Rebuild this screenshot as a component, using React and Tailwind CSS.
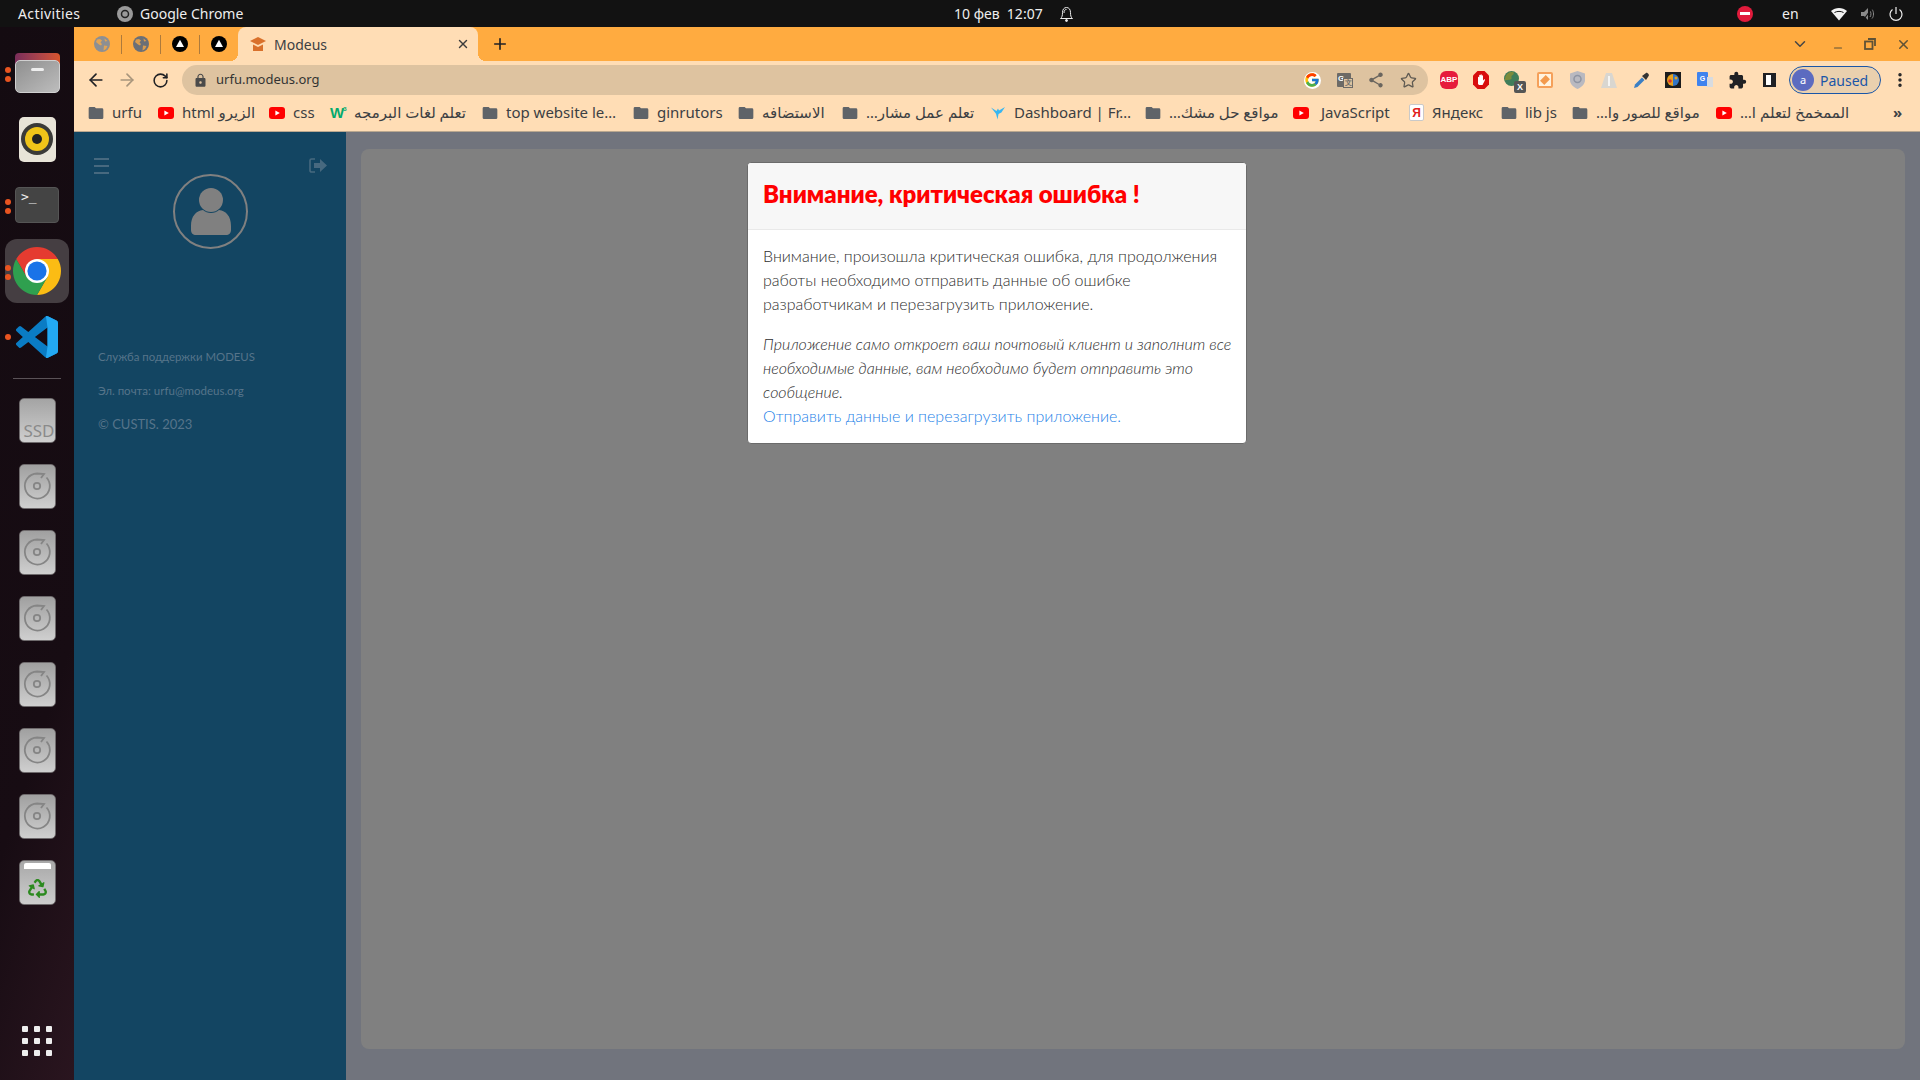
import React from "react";
import { ArrowLeft, ArrowRight, RotateCw, Star, X, Plus, ChevronDown, Minus, Ellipsis } from "lucide-react";
import { MdLock, MdShare, MdExtension } from "react-icons/md";
import { FcGoogle } from "react-icons/fc";
import { FaRecycle } from "react-icons/fa";

const Folder = () => (
  <svg width="16" height="16" viewBox="0 0 24 24" className="shrink-0"><path fill="#5f6368" d="M10 3H3a2 2 0 0 0-2 2v14a2 2 0 0 0 2 2h18a2 2 0 0 0 2-2V7a2 2 0 0 0-2-2H12z" /></svg>
);
const Yt = () => (
  <svg width="16" height="16" viewBox="0 0 16 16" className="shrink-0"><rect x="0" y="2" width="16" height="12" rx="3" fill="#ff0000" /><path d="M6.4 5.4 10.8 8l-4.4 2.6z" fill="#fff" /></svg>
);
const W3 = () => (
  <span className="w-[16px] h-[16px] shrink-0 flex items-start text-[#04aa6d] font-bold text-[15px] leading-[16px] font-['Liberation_Sans',sans-serif]">W<span className="text-[6px] leading-[8px] -ml-[1px]">3</span></span>
);
const Bird = () => (
  <svg width="16" height="16" viewBox="0 0 16 16" className="shrink-0"><path d="M1 2.5 6.5 6 8 3.5l1 2L15 2l-3.6 5.5L8.5 9 7.5 14.5 6 8.8z" fill="#38b6f1" /></svg>
);
const Ya = () => (
  <span className="w-[15px] h-[17px] shrink-0 bg-white border border-[#c9c9c9] rounded-[2px] flex items-center justify-center text-[#e0201b] font-bold text-[12px] leading-none font-['Liberation_Sans',sans-serif]">Я</span>
);

const bookmarks = [
  { w: "w-[70px] gap-[8px]", icon: <Folder />, t: "urfu" },
  { w: "w-[111px] gap-[8px]", icon: <Yt />, t: "html الزيرو" },
  { w: "w-[61px] gap-[8px]", icon: <Yt />, t: "css" },
  { w: "w-[152px] gap-[8px]", icon: <W3 />, t: "تعلم لغات البرمجه" },
  { w: "w-[151px] gap-[8px]", icon: <Folder />, t: "top website le…" },
  { w: "w-[105px] gap-[8px]", icon: <Folder />, t: "ginrutors" },
  { w: "w-[104px] gap-[8px]", icon: <Folder />, t: "الاستضافه" },
  { w: "w-[148px] gap-[8px]", icon: <Folder />, t: "تعلم عمل مشار…", rtl: true },
  { w: "w-[155px] gap-[8px]", icon: <Bird />, t: "Dashboard | Fr…" },
  { w: "w-[148px] gap-[8px]", icon: <Folder />, t: "مواقع حل مشك…", rtl: true },
  { w: "w-[116px] gap-[12px]", icon: <Yt />, t: "JavaScript" },
  { w: "w-[92px] gap-[8px]", icon: <Ya />, t: "Яндекс" },
  { w: "w-[71px] gap-[8px]", icon: <Folder />, t: "lib js" },
  { w: "w-[144px] gap-[8px]", icon: <Folder />, t: "مواقع للصور وا…", rtl: true },
  { w: "w-[159px] gap-[8px]", icon: <Yt />, t: "الممخمخ لتعلم ا…", rtl: true },
];

const Globe = ({ color }) => (
  <svg width="16" height="16" viewBox="0 0 16 16"><circle cx="8" cy="8" r="8" fill={color} /><path d="M3 3.5 6 3l2 1.5L6.5 6.5 8 8l-1 1.5-2-1-3-2.5zM10 9.5l3.5.5-1.5 3-2.5 1.5zM10.5 2.5 13.5 5 11 5.5z" fill="#ffab40" opacity=".75" /></svg>
);
const TriFav = () => (
  <svg width="16" height="16" viewBox="0 0 16 16"><circle cx="8" cy="8" r="8" fill="#000" /><path d="M8 3.8 12 11H4z" fill="#fff" /></svg>
);
const Sep = () => <span className="ml-[11px] w-px h-[19px] bg-[#ad7a3c] shrink-0" />;

const Dot = ({ top }) => <span className={`absolute left-[5px] w-[6px] h-[6px] rounded-full bg-[#e95420] ${top}`} />;

const Disc = () => (
  <div className="w-[37px] h-[45px] rounded-[5px] bg-gradient-to-b from-[#a0a0a0] to-[#cfcfcf] border border-[#6e6a6c] flex items-center justify-center">
    <svg width="30" height="30" viewBox="0 0 30 30" fill="none" stroke="#858585" strokeWidth="1.8">
      <path d="M24.500 6.500A12.500 12.500 0 1 1 15 2.500l7 .5-3 4" />
      <circle cx="15" cy="15" r="3.200" />
    </svg>
  </div>
);

const DockItem = ({ children, dots }) => (
  <div className="relative h-[66px] flex items-center justify-center">
    {dots === 2 && <><Dot top="top-[27px]" /><Dot top="top-[36px]" /></>}
    {dots === 1 && <Dot top="top-[30px]" />}
    {children}
  </div>
);

function Dock() {
  return (
    <aside className="w-[74px] shrink-0 flex flex-col pt-[13px] bg-[linear-gradient(108deg,#140b11_0%,#170c13_65%,#2a151f_100%)]">
      <DockItem dots={2}>
        <div className="relative w-[45px] h-[40px]">
          <div className="absolute left-[0px] top-0 w-[45px] h-[20px] rounded-t-[4px] bg-gradient-to-r from-[#7a2d5a] to-[#d8552a]" />
          <div className="absolute left-0 bottom-0 w-[45px] h-[33px] rounded-[5px] bg-gradient-to-br from-[#8f8f8f] to-[#bdbdbd] border border-[#d0d0d0] flex justify-center pt-[7px]">
            <span className="w-[13px] h-[3px] rounded-sm bg-[#eeeeee]" />
          </div>
        </div>
      </DockItem>
      <DockItem>
        <div className="w-[37px] h-[45px] rounded-[5px] bg-[#e8e4d8] flex items-center justify-center">
          <svg width="32" height="32" viewBox="0 0 32 32"><circle cx="16" cy="16" r="16" fill="#3a3a38" /><circle cx="16" cy="16" r="12" fill="#f0c419" /><circle cx="16" cy="16" r="5" fill="#222" /></svg>
        </div>
      </DockItem>
      <DockItem dots={2}>
        <div className="w-[44px] h-[36px] rounded-[4px] bg-[#444444] border border-[#555555] pl-[5px] font-['DejaVu_Sans_Mono',monospace] text-[13px] leading-[18px] text-[#eeeeee]">&gt;_</div>
      </DockItem>
      <DockItem dots={2}>
        <div className="w-[64px] h-[64px] rounded-[12px] bg-[#453e42] flex items-center justify-center">
          <svg width="48" height="48" viewBox="4 4 40 40">
            <path d="M6.680 14A20 20 0 0 1 41.320 14H24L15.340 29z" fill="#e53b30" />
            <path d="M41.320 14A20 20 0 0 1 24 44L32.660 29 24 14z" fill="#fbbc14" />
            <path d="M6.680 14A20 20 0 0 0 24 44L32.660 29H15.340z" fill="#2fa04f" />
            <circle cx="24" cy="24" r="10" fill="#fff" />
            <circle cx="24" cy="24" r="8" fill="#1a73e8" />
          </svg>
        </div>
      </DockItem>
      <DockItem dots={1}>
        <svg width="42" height="42" viewBox="0 0 24 24">
          <path fill="#0a7cc4" d="M23.150 2.587 18.210.21a1.494 1.494 0 0 0-1.705.29l-9.460 8.630-4.120-3.128a.999.999 0 0 0-1.276.057L.327 7.261A1 1 0 0 0 .326 8.740L3.899 12 .326 15.260a1 1 0 0 0 .001 1.479L1.650 17.940a.999.999 0 0 0 1.276.057l4.120-3.128 9.460 8.630a1.492 1.492 0 0 0 1.704.29l4.942-2.377A1.500 1.500 0 0 0 24 20.060V3.939a1.500 1.500 0 0 0-.850-1.352zm-5.146 14.861L10.826 12l7.178-5.448v10.896z" />
          <path fill="#23a9f2" d="M17.100.1a1.500 1.500 0 0 1 1.110.11l4.940 2.377A1.500 1.500 0 0 1 24 3.939V20.060a1.500 1.500 0 0 1-.850 1.353l-4.940 2.377a1.500 1.500 0 0 1-1.110.11l.904-6.452V6.552z" />
        </svg>
      </DockItem>
      <div className="mx-[13px] my-[8px] h-px bg-[#5a5257]" />
      <DockItem>
        <div className="relative w-[37px] h-[45px] rounded-[5px] bg-gradient-to-b from-[#a4a4a4] to-[#cfcfcf] border border-[#6e6a6c] overflow-hidden">
          <span className="absolute right-0 bottom-0 font-['Noto_Sans',sans-serif] text-[17px] leading-[22px] text-[#8a8a8a]">SSD</span>
        </div>
      </DockItem>
      <DockItem><Disc /></DockItem>
      <DockItem><Disc /></DockItem>
      <DockItem><Disc /></DockItem>
      <DockItem><Disc /></DockItem>
      <DockItem><Disc /></DockItem>
      <DockItem><Disc /></DockItem>
      <DockItem>
        <div className="relative w-[37px] h-[45px] rounded-[5px] bg-gradient-to-b from-[#a8a8a8] to-[#cdcdcd] border border-[#6e6a6c] flex items-center justify-center pt-[12px]">
          <span className="absolute left-[4px] top-[2px] w-[27px] h-[6px] rounded-t-[2px] bg-white" />
          <FaRecycle size={19} color="#2c8a1f" />
        </div>
      </DockItem>
      <div className="mt-auto mb-[24px] mx-auto grid grid-cols-3 gap-[6px]">
        {Array.from({ length: 9 }).map((_, i) => <span key={i} className="w-[6px] h-[6px] rounded-[1px] bg-[#eeeeee]" />)}
      </div>
    </aside>
  );
}

function TopBar() {
  return (
    <header className="h-[27px] shrink-0 bg-[#121212] flex items-center text-[#eeeeee] text-[14px] font-['Noto_Sans',sans-serif] whitespace-nowrap">
      <span className="ml-[18px] w-[99px] tracking-[0.4px]">Activities</span>
      <svg width="16" height="16" viewBox="0 0 16 16"><circle cx="8" cy="8" r="8" fill="#9a9a9a" /><circle cx="8" cy="8" r="3.500" fill="none" stroke="#222" strokeWidth="1.500" /></svg>
      <span className="ml-[7px] w-[814px]">Google Chrome</span>
      <span className="w-[105px]">10 фев&nbsp; 12:07</span>
      <svg width="15" height="17" viewBox="0 0 15 17" fill="none" stroke="#eeeeee" strokeWidth="1"><path d="M1.500 13.500c1.500-1 2-3 2-6 0-3 1.500-5 4-5s4 2 4 5c0 3 .5 5 2 6z" /><path d="M5 8c0-2 .5-3.500 2.500-3.500" /><circle cx="7.500" cy="15.500" r="1" fill="#eeeeee" /></svg>
      <span className="ml-[663px] w-[16px] h-[16px] rounded-full bg-[#e01b3c] flex items-center justify-center"><span className="w-[10px] h-[3px] bg-white" /></span>
      <span className="ml-[29px] w-[49px]">en</span>
      <svg width="16" height="14" viewBox="0 0 16 14"><path d="M8 13.500 0 4c4.500-4 11.500-4 16 0z" fill="#f2f2f2" /><path d="M3.500 5.500c2.500-1.500 6.500-1.500 9 0" stroke="#121212" strokeWidth="1" fill="none" /></svg>
      <svg className="ml-[13px]" width="16" height="16" viewBox="0 0 16 16" fill="#8a8a8a"><path d="M1 6h3l4-4v12l-4-4H1z" /><path d="M10 5c1 1 1.500 4 0 6M12 3.500c2 2 2 7 0 9" stroke="#8a8a8a" fill="none" /><path d="M3 14.500 12.500 1.500" stroke="#121212" strokeWidth="1.200" /></svg>
      <svg className="ml-[12px]" width="16" height="16" viewBox="0 0 16 16" fill="none" stroke="#eeeeee" strokeWidth="1.200"><path d="M8 1v7" /><path d="M4.500 3.500a6 6 0 1 0 7 0" /></svg>
    </header>
  );
}

function TabStrip() {
  return (
    <div className="h-[34px] shrink-0 bg-[#ffab40] flex items-center pl-[20px]">
      <span className="w-[16px] flex"><Globe color="#8d8f93" /></span>
      <Sep />
      <span className="ml-[11px] flex"><Globe color="#6b6f76" /></span>
      <Sep />
      <span className="ml-[11px] flex"><TriFav /></span>
      <Sep />
      <span className="ml-[11px] flex"><TriFav /></span>
      <div className="relative ml-[11px] w-[240px] self-stretch bg-[#ffddb5] rounded-t-[8px] flex items-center pl-[12px] pr-[8px]">
        <span className="absolute -left-[8px] bottom-0 w-[8px] h-[8px] bg-[radial-gradient(circle_at_0_0,transparent_8px,#ffddb5_8px)]" />
        <span className="absolute -right-[8px] bottom-0 w-[8px] h-[8px] bg-[radial-gradient(circle_at_100%_0,transparent_8px,#ffddb5_8px)]" />
        <svg width="16" height="16" viewBox="0 0 16 16" fill="#d9702b"><path d="M8 1 16 5 8 9 0 5z" /><path d="M3 8.500 8 11l5-2.500V15H3z" /></svg>
        <span className="ml-[8px] flex-1 text-[14px] text-[#3c4043] font-['Noto_Sans',sans-serif]">Modeus</span>
        <X size={14} strokeWidth={2.4} color="#3c3c3c" />
      </div>
      <Plus className="ml-[13px]" size={18} strokeWidth={2.2} color="#202124" />
      <ChevronDown className="ml-[1282px]" size={18} strokeWidth={2} color="#454545" />
      <Minus className="ml-[23px] mt-[8px]" size={12} strokeWidth={2.2} color="#5f5236" />
      <svg className="ml-[20px]" width="12" height="12" viewBox="0 0 12 12" fill="none" stroke="#5f5236" strokeWidth="1.800"><rect x="1" y="3.500" width="7.500" height="7.500" /><path d="M4 1h7v7" /></svg>
      <X className="ml-[20px]" size={15} strokeWidth={2.4} color="#5f5236" />
    </div>
  );
}

const Ext = ({ children }) => <span className="w-[32px] h-[20px] shrink-0 flex items-center justify-center">{children}</span>;

function Toolbar() {
  return (
    <div className="h-[38px] shrink-0 bg-[#ffddb5] flex items-center pl-[12px]">
      <span className="w-[20px] flex justify-center"><ArrowLeft size={20} strokeWidth={2} color="#202124" /></span>
      <span className="ml-[11px] w-[20px] flex justify-center"><ArrowRight size={20} strokeWidth={2} color="#a8957c" /></span>
      <span className="ml-[13px] w-[20px] flex justify-center"><RotateCw size={17} strokeWidth={2.2} color="#202124" /></span>
      <div className="ml-[12px] w-[1246px] h-[30px] rounded-full bg-[#dec3a0] flex items-center pl-[11px] pr-[4px]">
        <MdLock size={15} color="#4a4a4a" />
        <span className="ml-[8px] flex-1 text-[13px] text-[#333] font-['Noto_Sans',sans-serif]">urfu.modeus.org</span>
        <Ext><span className="w-[17px] h-[17px] bg-white rounded-full flex items-center justify-center"><FcGoogle size={16} /></span></Ext>
        <Ext><span className="relative w-[14px] h-[14px] bg-[#6d6a66] rounded-[1px] text-white text-[8px] leading-[12px] pl-[1px] font-bold font-['Liberation_Sans',sans-serif]">G<span className="absolute left-[6px] top-[5px] w-[10px] h-[10px] bg-[#dec3a0] border border-[#6d6a66] text-[#6d6a66] text-[7px] leading-[8px] pl-[1px]">文</span></span></Ext>
        <Ext><MdShare size={18} color="#6a655e" /></Ext>
        <Ext><Star size={17} strokeWidth={1.8} color="#5f5a52" /></Ext>
      </div>
      <span className="ml-[5px] flex">
        <Ext><span className="w-[18px] h-[18px] rounded-[6px] bg-[#e61b3c] text-white text-[8px] leading-[18px] font-bold text-center font-['Liberation_Sans',sans-serif]">ABP</span></Ext>
        <Ext><svg width="16" height="18" viewBox="0 0 16 18"><path d="M4.500 0h7L16 4.500v9L11.500 18h-7L0 13.500v-9z" fill="#d80d0d" /><path d="M5 13V6.500c0-1 1.200-1 1.200 0V4.500c0-1 1.300-1 1.300 0V4c0-1 1.300-1 1.300 0v1c0-1 1.200-1 1.200 0v4.500l1-1c.7-.5 1.300.2.800 1L9.500 14H6z" fill="#fff" /></svg></Ext>
        <Ext><span className="relative w-[18px] h-[18px] flex"><svg width="15" height="15" viewBox="0 0 16 16"><circle cx="8" cy="8" r="8" fill="#3f7d5a" /><path d="M1 10a8 8 0 0 1 9-9c2 3-3 3-2 6s-5 2-7 3z" fill="#7d8b3b" /></svg><span className="absolute -right-[4px] -bottom-[4px] w-[12px] h-[12px] bg-[#555] rounded-[2px] text-white text-[9px] leading-[12px] text-center font-bold font-['Liberation_Sans',sans-serif]">X</span></span></Ext>
        <Ext><span className="w-[16px] h-[16px] rounded-[2px] bg-[#fff3e0] border-2 border-[#f5a05a] flex items-center justify-center"><span className="w-[6px] h-[8px] bg-[#f39a4d] rotate-45" /></span></Ext>
        <Ext><svg width="15" height="18" viewBox="0 0 15 18"><path d="M7.500 0 15 2.500V9c0 4-3 7-7.500 9C3 16 0 13 0 9V2.500z" fill="#b9b9c0" /><circle cx="7.500" cy="8" r="3.500" fill="none" stroke="#8f95a3" strokeWidth="1.500" /></svg></Ext>
        <Ext><svg width="16" height="16" viewBox="0 0 16 16"><path d="M5 1h6l5 15H0z" fill="#d9d6d0" /><path d="M8 4v10" stroke="#fff" strokeWidth="1.500" /></svg></Ext>
        <Ext><svg width="17" height="17" viewBox="0 0 17 17"><path d="M1 16l1-3.500 7-7 2.500 2.500-7 7z" fill="#3b7fc4" /><path d="M9 4l4-3c1-.8 3.500 1.500 2.800 2.800L13 8z" fill="#333" /></svg></Ext>
        <Ext><span className="w-[16px] h-[16px] bg-[#1c1c1c] flex items-center justify-center"><svg width="14" height="14" viewBox="0 0 14 14"><path d="M7 1a6 6 0 0 0 0 12z" fill="#e9a21c" /><path d="M7 1a6 6 0 0 1 0 12z" fill="#3576c4" /><circle cx="4" cy="8" r="1.800" fill="#d33" /><circle cx="10" cy="5" r="1.500" fill="#e9a21c" /></svg></span></Ext>
        <Ext><span className="relative w-[16px] h-[16px]"><span className="absolute left-0 top-0 w-[11px] h-[14px] bg-[#3f83ee] rounded-[1px] text-white text-[7px] leading-[14px] text-center font-bold font-['Liberation_Sans',sans-serif]">G</span><span className="absolute left-[10px] top-[5px] w-[6px] h-[10px] bg-[#d7dbe0]" /></span></Ext>
        <Ext><MdExtension size={19} color="#202124" /></Ext>
        <Ext><span className="w-[13px] h-[14px] border-2 border-[#202124] border-l-[3px] bg-[#fff] border-r-[5px]" /></Ext>
      </span>
      <div className="ml-[4px] w-[92px] h-[28px] rounded-full bg-[#ead0ae] border border-[#1a56a8] flex items-center pl-[2px] shrink-0">
        <span className="w-[22px] h-[22px] rounded-full bg-[#5c6bc0] text-white text-[11px] leading-[22px] text-center font-['Noto_Sans',sans-serif]">a</span>
        <span className="ml-[6px] text-[14px] text-[#1a56a8] font-['Noto_Sans',sans-serif]">Paused</span>
      </div>
      <span className="ml-[4px] w-[30px] flex justify-center"><Ellipsis className="rotate-90" size={18} strokeWidth={2.6} color="#202124" /></span>
    </div>
  );
}

function Bookmarks() {
  return (
    <div className="h-[33px] shrink-0 bg-[#ffddb5] border-b border-[#b9a78f] flex items-center pl-[14px] pb-[5px] text-[15px] text-[#3c4043] font-['Noto_Sans','DejaVu_Sans',sans-serif] whitespace-nowrap">
      {bookmarks.map((b) => (
        <span key={b.t} className={`${b.w} shrink-0 flex items-center`}>
          {b.icon}
          <span dir={b.rtl ? "rtl" : undefined}>{b.t}</span>
        </span>
      ))}
      <span className="ml-[18px] text-[15px] font-bold">»</span>
    </div>
  );
}

function Sidebar() {
  return (
    <aside className="w-[272px] shrink-0 bg-[#134562] flex flex-col pt-[26px] pl-[20px] pr-[19px] font-['Lato','Noto_Sans',sans-serif] text-[#56748a]">
      <div className="flex items-center justify-between h-[15px]">
        <span className="w-[15px] flex flex-col gap-[5px]">
          <span className="h-[2px] bg-[#47697f]" /><span className="h-[2px] bg-[#47697f]" /><span className="h-[2px] bg-[#47697f]" />
        </span>
        <svg width="18" height="15" viewBox="0 0 18 15" fill="none"><path d="M6 1H2.500A1.500 1.500 0 0 0 1 2.500v10A1.500 1.500 0 0 0 2.500 14H6" stroke="#47697f" strokeWidth="1.600" /><path d="M5 5h6V1l7 6.500L11 14v-4H5z" fill="#47697f" /></svg>
      </div>
      <div className="mt-[1px] self-center w-[75px] h-[75px] rounded-full border-2 border-[#808080] flex items-center justify-center">
        <svg width="40" height="48" viewBox="0 0 40 48" fill="#808080"><circle cx="20" cy="12" r="12" /><path d="M0 38c0-10 5-15 12-16 2 2 5 3 8 3s6-1 8-3c7 1 12 6 12 16v4c0 3-2 5-5 5H5c-3 0-5-2-5-5z" /></svg>
      </div>
      <p className="mt-[99px] ml-[4px] text-[11.4px] leading-[18px] whitespace-nowrap">Служба поддержки MODEUS</p>
      <p className="mt-[16px] ml-[4px] text-[11.5px] leading-[18px] whitespace-nowrap">Эл. почта: urfu@modeus.org</p>
      <p className="mt-[15px] ml-[4px] text-[13px] leading-[18px] whitespace-nowrap">© CUSTIS. 2023</p>
    </aside>
  );
}

function Modal() {
  return (
    <div className="absolute inset-0 flex justify-center pt-[30px] pointer-events-none">
      <div className="w-[500px] h-[282px] bg-white rounded-[4px] border border-[#6b6b6b] overflow-hidden font-['Lato','Noto_Sans',sans-serif]">
        <div className="h-[67px] bg-[#f7f7f7] border-b border-[#e9e9e9] pl-[15px] pb-[4px] flex items-center">
          <h1 className="text-[24px] font-extrabold text-[#ff0000] whitespace-nowrap">Внимание, критическая ошибка !</h1>
        </div>
        <div className="pl-[15px] pt-[14px] text-[16px] font-light leading-[24px] text-[#2e2e2e] whitespace-nowrap">
          <p>Внимание, произошла критическая ошибка, для продолжения<br />работы необходимо отправить данные об ошибке<br />разработчикам и перезагрузить приложение.</p>
          <p className="mt-[16px] italic">Приложение само откроет ваш почтовый клиент и заполнит все<br />необходимые данные, вам необходимо будет отправить это<br />сообщение.</p>
          <a className="block text-[#1f83e8]">Отправить данные и перезагрузить приложение.</a>
        </div>
      </div>
    </div>
  );
}

export default function App() {
  return (
    <div className="w-[1920px] h-[1080px] overflow-hidden flex flex-col">
      <TopBar />
      <div className="flex-1 flex min-h-0">
        <Dock />
        <div className="flex-1 flex flex-col min-w-0">
          <TabStrip />
          <Toolbar />
          <Bookmarks />
          <main className="relative flex-1 flex min-h-0 bg-[#71747d]">
            <Sidebar />
            <div className="flex-1 pl-[15px] pr-[15px] pt-[17px] pb-[31px]">
              <div className="h-full bg-[#808080] rounded-[8px]" />
            </div>
            <Modal />
          </main>
        </div>
      </div>
    </div>
  );
}
